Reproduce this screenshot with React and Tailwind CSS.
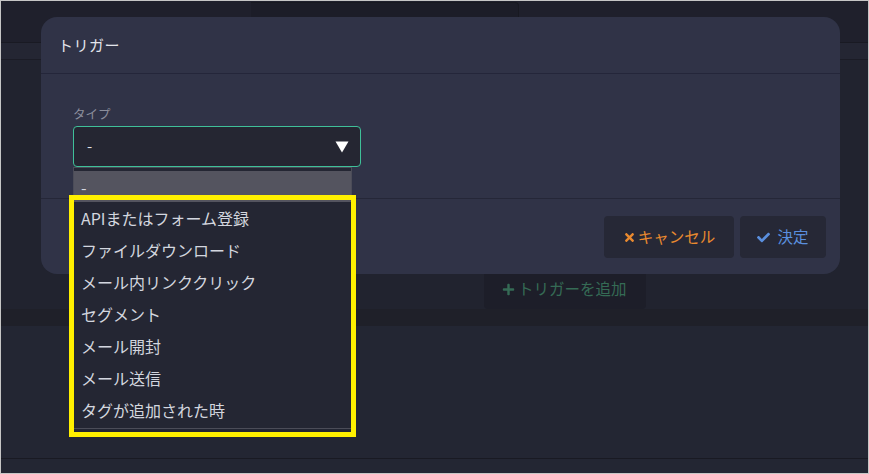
import React from "react";
import { FaTimes, FaCheck, FaPlus } from "react-icons/fa";

const options = [
  "APIまたはフォーム登録",
  "ファイルダウンロード",
  "メール内リンククリック",
  "セグメント",
  "メール開封",
  "メール送信",
  "タグが追加された時",
];

const font = { fontFamily: '"Noto Sans CJK JP", "Noto Sans", sans-serif' };

export default function App() {
  return (
    <div
      className="relative w-[869px] h-[474px] overflow-hidden border border-[#c6c6c6] bg-[#232633] flex flex-col"
      style={font}
    >
      {/* background page */}
      <div className="h-[42px] bg-[#1f202c] border-b border-[#191a23] flex">
        <div className="ml-[250px] mt-[1px] w-[268px] h-[20px] bg-[#1c1d28] rounded-tr-[4px] border-r border-t border-[#181921]" />
      </div>
      <div className="h-[17px] bg-[#242633] border-b border-[#1b1c26]" />
      <div className="h-[249px] bg-[#21232f] flex justify-start items-end">
        <div className="ml-[483px] w-[162px] h-[40px] bg-[#1d1e29] rounded-b-[4px] flex items-center pl-[18px] gap-[3px] text-[15.5px] text-[#356b55]">
          <FaPlus className="w-[13px] h-[13px]" />
          <span>トリガーを追加</span>
        </div>
      </div>
      <div className="h-[17px] bg-[#1f2029]" />
      <div className="flex-1 bg-[#232633] border-b border-[#191a23]" />
      <div className="h-[14px] bg-[#232633]" />

      {/* modal */}
      <div className="absolute left-[40px] top-[16px] w-[799px] h-[257px] rounded-[16px] bg-[#303347] flex flex-col">
        <div className="h-[57px] border-b border-[#24263a] flex items-center pl-[17px] text-[15px] tracking-[0.5px] text-[#e3e5ec]">
          トリガー
        </div>
        <div className="h-[125px] border-b border-[#252738] pl-[32px] pt-[31px] flex flex-col">
          <div className="text-[12.5px] leading-[18px] text-[#8b8e9c]">タイプ</div>
          <div className="mt-[3px] w-[288px] h-[41px] rounded-[4px] border border-[#3fc099] bg-[#252632] flex items-center justify-between pl-[13px] pr-[11px] text-[15px] text-[#dfe1e8]">
            <span>-</span>
            <svg width="14" height="12" viewBox="0 0 14 12">
              <path d="M0.5 0.5 H13.5 L7 11.5 Z" fill="#ffffff" />
            </svg>
          </div>
        </div>
        <div className="flex-1 flex items-start justify-end gap-[6px] pt-[17px] pr-[14px]">
          <button className="h-[42px] w-[130px] rounded-[4px] bg-[#262836] flex items-center justify-center gap-[2px] text-[15.5px] text-[#e98a2f]">
            <FaTimes className="w-[13px] h-[13px]" />
            <span>キャンセル</span>
          </button>
          <button className="h-[42px] w-[86px] rounded-[4px] bg-[#262836] flex items-center justify-center gap-[7px] text-[15.5px] text-[#5a8fde]">
            <FaCheck className="w-[13px] h-[13px]" />
            <span>決定</span>
          </button>
        </div>
      </div>

      {/* open dropdown list */}
      <div className="absolute left-[72px] top-[166px] w-[279px] h-[262px] bg-[#242633] border border-[#4b4c58] pt-[3px] flex flex-col text-[16px] text-[#d3d6df]">
        <div className="h-[31px] bg-[#54545f] flex items-center pl-[7px]">-</div>
        {options.map((o) => (
          <div key={o} className="h-[32px] flex items-center pl-[7px]">
            {o}
          </div>
        ))}
      </div>

      {/* highlight annotation */}
      <div className="absolute left-[68px] top-[194px] w-[287px] h-[242px] border-[5px] border-[#fff000]" />
    </div>
  );
}
